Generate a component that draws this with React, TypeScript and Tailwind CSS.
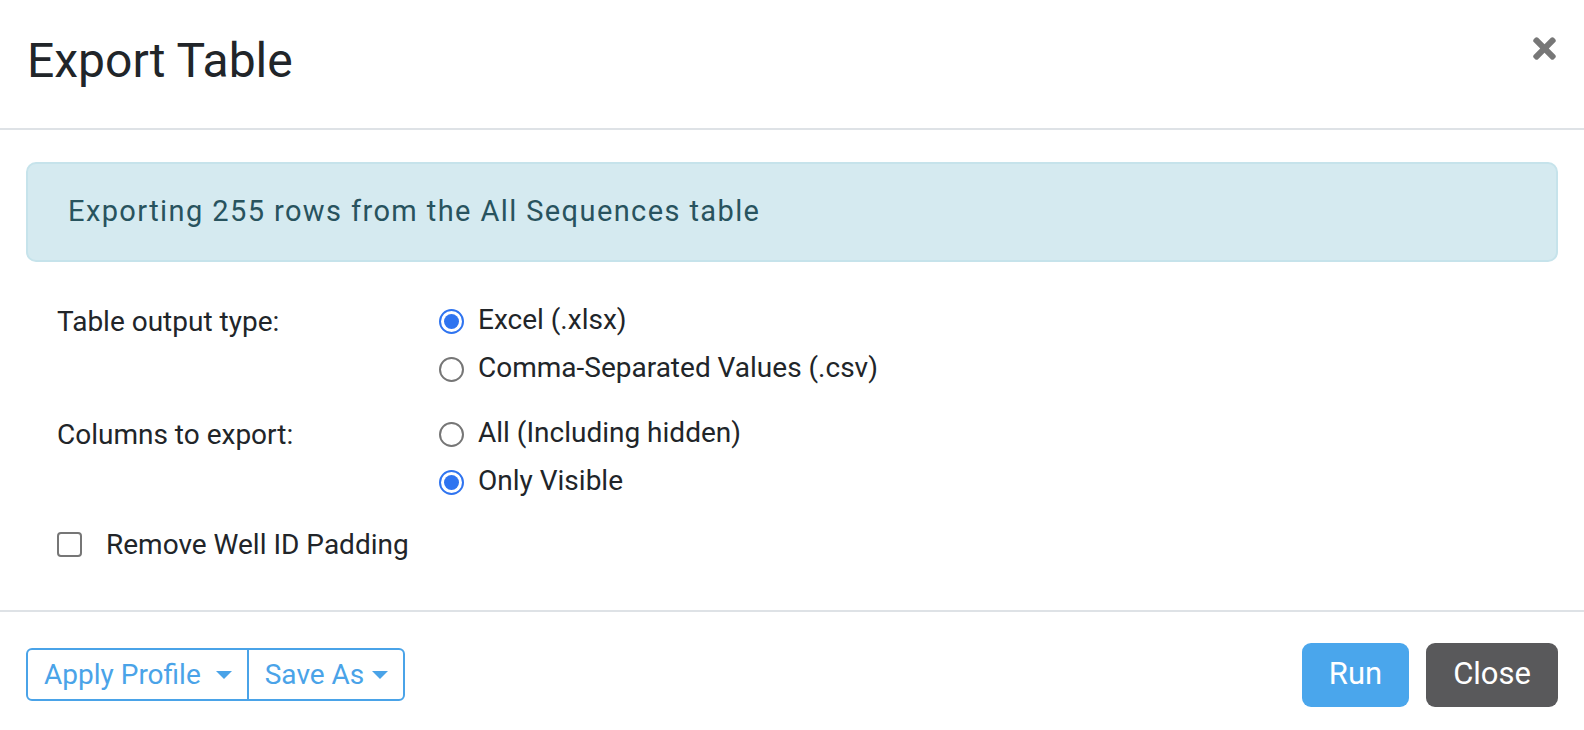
import { useState } from "react";
import { FaTimes } from "react-icons/fa";

type Option = { value: string; label: string };

const outputTypes: Option[] = [
  { value: "xlsx", label: "Excel (.xlsx)" },
  { value: "csv", label: "Comma-Separated Values (.csv)" },
];

const columnChoices: Option[] = [
  { value: "all", label: "All (Including hidden)" },
  { value: "visible", label: "Only Visible" },
];

const Caret = () => (
  <svg width="16" height="8" viewBox="0 0 16 8" className="shrink-0">
    <path d="M0 0h16L8 8z" fill="currentColor" />
  </svg>
);

const RadioGroup = ({
  options,
  value,
  onChange,
}: {
  options: Option[];
  value: string;
  onChange: (v: string) => void;
}) => (
  <div className="flex flex-col">
    {options.map((opt) => {
      const checked = opt.value === value;
      return (
        <label key={opt.value} onClick={() => onChange(opt.value)} className="flex h-[48px] cursor-pointer items-center gap-[14px]">
          <span
            className={`mt-[4px] flex h-[25px] w-[25px] shrink-0 items-center justify-center rounded-full border-2 bg-white ${
              checked ? "border-[#2f74f0]" : "border-[#767676]"
            }`}
          >
            {checked && <span className="h-[15px] w-[15px] rounded-full bg-[#2f74f0]" />}
          </span>
          <span>{opt.label}</span>
        </label>
      );
    })}
  </div>
);

const App = () => {
  const [outputType, setOutputType] = useState("xlsx");
  const [columns, setColumns] = useState("visible");
  const [removePadding, setRemovePadding] = useState(false);

  return (
    <div className="min-h-screen bg-white font-['Roboto',sans-serif] text-[#212529]">
      <div className="flex items-start justify-between border-b-2 border-[#dee2e6] pb-[38px] pl-[27px] pr-[23px] pt-[32px]">
        <h1 className="text-[48px] font-normal leading-[58px]">Export Table</h1>
        <button className="text-[#777777]">
          <FaTimes size={33} />
        </button>
      </div>

      <div className="px-[26px] pb-[41px] pt-[32px]">
        <div className="rounded-[10px] border-2 border-[#c6e3eb] bg-[#d5eaf0] px-[40px] py-[26px] text-[29px] leading-[43.5px] tracking-[1.4px] text-[#28535e]">
          Exporting 255 rows from the All Sequences table
        </div>

        <div className="mt-[34px] pl-[31px] text-[28px] leading-[48px]">
          <div className="flex">
            <div className="w-[382px] pt-[2px]">Table output type:</div>
            <RadioGroup options={outputTypes} value={outputType} onChange={setOutputType} />
          </div>
          <div className="mt-[17px] flex">
            <div className="w-[382px] pt-[2px]">Columns to export:</div>
            <RadioGroup options={columnChoices} value={columns} onChange={setColumns} />
          </div>
          <label className="mt-[16px] flex h-[48px] cursor-pointer items-center gap-[24px]" onClick={() => setRemovePadding(!removePadding)}>
            <span
              className={`flex h-[25px] w-[25px] items-center justify-center rounded-[4px] border-2 ${
                removePadding ? "border-[#2f74f0] bg-[#2f74f0]" : "border-[#767676] bg-white"
              }`}
            >
              {removePadding && (
                <svg width="16" height="16" viewBox="0 0 16 16">
                  <path d="M3 8.5l3.2 3.2L13 4.8" fill="none" stroke="white" strokeWidth="2.5" />
                </svg>
              )}
            </span>
            <span>Remove Well ID Padding</span>
          </label>
        </div>
      </div>

      <div className="flex items-center justify-between border-t-2 border-[#dee2e6] px-[26px] pb-[31px] pt-[31px]">
        <div className="flex h-[53px] rounded-[6px] border-2 border-[#4aa3e8] text-[28px] text-[#4aa3e8]">
          <button className="flex items-center gap-[15px] border-r-2 border-[#4aa3e8] pl-[16px] pr-[15px]">
            Apply Profile
            <Caret />
          </button>
          <button className="flex items-center gap-[8px] pl-[16px] pr-[15px]">
            Save As
            <Caret />
          </button>
        </div>
        <div className="flex gap-[17px] text-[31px] text-white">
          <button className="h-[64px] rounded-[9px] bg-[#4aa6ec] px-[27px]">Run</button>
          <button className="h-[64px] rounded-[9px] bg-[#59595b] px-[27px]">Close</button>
        </div>
      </div>
    </div>
  );
};

export default App;
